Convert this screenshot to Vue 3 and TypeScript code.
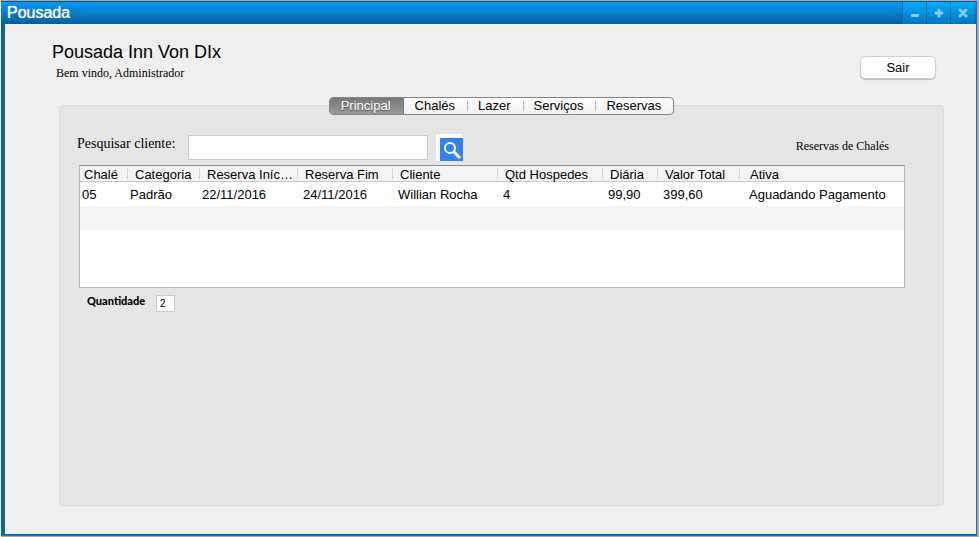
<script setup lang="ts">
import { computed, ref } from 'vue'

interface Column {
  key: string
  label: string
  width: number | null
}

const tabs: string[] = ['Principal', 'Chalés', 'Lazer', 'Serviços', 'Reservas']
const activeTab = ref('Principal')
const search = ref('')
const quantity = ref('2')

const columns: Column[] = [
  { key: 'chale', label: 'Chalé', width: 47 },
  { key: 'categoria', label: 'Categoria', width: 72 },
  { key: 'inicio', label: 'Reserva Iníc…', width: 98 },
  { key: 'fim', label: 'Reserva Fim', width: 95 },
  { key: 'cliente', label: 'Cliente', width: 105 },
  { key: 'hospedes', label: 'Qtd Hospedes', width: 105 },
  { key: 'diaria', label: 'Diária', width: 55 },
  { key: 'total', label: 'Valor Total', width: 82 },
  { key: 'ativa', label: 'Ativa', width: null },
]

const reservations: Record<string, string>[] = [
  {
    chale: '05',
    categoria: 'Padrão',
    inicio: '22/11/2016',
    fim: '24/11/2016',
    cliente: 'Willian Rocha',
    hospedes: '4',
    diaria: '99,90',
    total: '399,60',
    ativa: 'Aguadando Pagamento',
  },
]

const visibleReservations = computed(() =>
  reservations.filter((r) => r.cliente.toLowerCase().includes(search.value.trim().toLowerCase())),
)
</script>

<template>
  <div class="desktop">
    <div class="window">
      <header class="titlebar">
        <span class="title">Pousada</span>
        <div class="window-buttons">
          <button type="button" aria-label="Minimizar">
            <svg viewBox="0 0 10 10"><rect x="1" y="6" width="8" height="3" rx="1" /></svg>
          </button>
          <button type="button" aria-label="Maximizar">
            <svg viewBox="0 0 10 10"><path d="M5 2v6M2 5h6" /></svg>
          </button>
          <button type="button" aria-label="Fechar">
            <svg viewBox="0 0 10 10"><path d="M2 2l6 6M8 2l-6 6" /></svg>
          </button>
        </div>
      </header>

      <main class="content">
        <div class="heading">
          <div>
            <h1>Pousada Inn Von DIx</h1>
            <p>Bem vindo, Administrador</p>
          </div>
          <button type="button" class="logout">Sair</button>
        </div>

        <nav class="tabs" role="tablist">
          <button
            v-for="tab in tabs"
            :key="tab"
            type="button"
            role="tab"
            :aria-selected="tab === activeTab"
            :class="{ active: tab === activeTab }"
            @click="activeTab = tab"
          >
            {{ tab }}
          </button>
        </nav>

        <section class="panel">
          <form class="search" @submit.prevent>
            <label for="cliente">Pesquisar cliente:</label>
            <input id="cliente" v-model="search" type="text" />
            <button type="submit" aria-label="Pesquisar">
              <svg viewBox="0 0 23 23">
                <circle cx="10" cy="10" r="5" />
                <path d="M14 14l6 6" />
              </svg>
            </button>
            <span class="caption">Reservas de Chalés</span>
          </form>

          <div class="grid">
            <table>
              <colgroup>
                <col
                  v-for="c in columns"
                  :key="c.key"
                  :style="c.width ? { width: c.width + 'px' } : undefined"
                />
              </colgroup>
              <thead>
                <tr>
                  <th v-for="c in columns" :key="c.key" scope="col"><span>{{ c.label }}</span></th>
                </tr>
              </thead>
              <tbody>
                <tr v-for="r in visibleReservations" :key="r.chale">
                  <td v-for="c in columns" :key="c.key">{{ r[c.key] }}</td>
                </tr>
                <tr class="blank" aria-hidden="true">
                  <td :colspan="columns.length"></td>
                </tr>
              </tbody>
            </table>
          </div>

          <div class="quantity">
            <label for="quantidade">Quantidade</label>
            <input id="quantidade" v-model="quantity" type="text" />
          </div>
        </section>
      </main>
    </div>
  </div>
</template>

<style>
body {
  background: #a9a9a9;
}
</style>

<style scoped>
* {
  box-sizing: border-box;
}

button,
input {
  margin: 0;
  padding: 0;
  font-family: inherit;
  border-radius: 0;
}

.desktop {
  display: flex;
  min-height: 100vh;
  padding: 1px 2px 1px 1px;
  font-family: "Liberation Sans", Arial, sans-serif;
  color: #000;
  background: linear-gradient(to right, #fff 1px, #a9a9a9 1px);
}

.window {
  flex: 1;
  display: flex;
  flex-direction: column;
  background: #efefef;
  border-right: 1px solid #1673d8;
  border-bottom: 1px solid #1673d8;
}

.titlebar {
  display: flex;
  align-items: center;
  height: 23px;
  padding: 0 2px 0 6px;
  border-top: 1px solid #07588a;
  background: linear-gradient(#0a98f2, #00619f);
}

.title {
  flex: 1;
  font-size: 16px;
  line-height: 22px;
  color: #fff;
  text-shadow: 0 0 1px #fff;
}

.window-buttons {
  display: flex;
  align-self: stretch;
}

.window-buttons button {
  width: 24px;
  border: 0;
  border-left: 1px solid #0369a8;
  background: linear-gradient(#00adff, #0074bd);
}

.window-buttons svg {
  display: block;
  width: 10px;
  height: 10px;
  margin: 0 auto;
  fill: #86cdf0;
}

.window-buttons path {
  fill: none;
  stroke: #86cdf0;
  stroke-width: 3;
  stroke-linecap: round;
}

.content {
  flex: 1;
  display: flex;
  flex-direction: column;
  padding: 16px 32px 28px 54px;
  border-left: 4px solid #11638f;
  border-bottom: 1px solid #11638f;
}

.heading {
  display: flex;
  justify-content: space-between;
  align-items: flex-start;
  height: 57px;
  margin-left: -7px;
  padding-right: 8px;
}

.heading h1 {
  margin: 0;
  font-size: 18px;
  font-weight: 400;
  line-height: 24px;
}

.heading p {
  margin: 0 0 0 4px;
  font-family: "Liberation Serif", "Times New Roman", serif;
  font-size: 12px;
  line-height: 18px;
}

.logout {
  width: 76px;
  height: 23px;
  margin-top: 16px;
  font-size: 13px;
  color: #000;
  background: #fff;
  border: 1px solid #cfcfcf;
  border-radius: 5px;
  box-shadow: 0 1px 1px #bdbdbd;
}

.tabs {
  display: flex;
  align-self: center;
  z-index: 1;
  height: 18px;
  border: 1px solid #858585;
  border-radius: 4px;
  background: linear-gradient(#fff, #f0f0f0);
  overflow: hidden;
}

.tabs button {
  position: relative;
  padding: 0 12px 0 11px;
  border: 0;
  font-size: 13px;
  line-height: 16px;
  color: #000;
  background: none;
}

.tabs button + button::before {
  content: "";
  position: absolute;
  left: 0;
  top: 3px;
  bottom: 3px;
  width: 1px;
  background: #bcbcbc;
}

.tabs button.active {
  color: #fff;
  background: linear-gradient(#777, #999);
  border-right: 1px solid #777;
  text-shadow: 0 1px 1px #555;
}

.tabs button.active + button::before {
  content: none;
}

.panel {
  flex: 1;
  margin-top: -10px;
  padding: 28px 38px 20px 17px;
  background: #e5e5e5;
  border: 1px solid #dbdbdb;
  border-radius: 4px;
}

.search {
  display: flex;
  align-items: flex-start;
  height: 31px;
  font-family: "Liberation Serif", "Times New Roman", serif;
}

.search label {
  width: 111px;
  font-size: 14px;
  line-height: 20px;
}

.search input {
  width: 240px;
  height: 25px;
  margin-top: 1px;
  padding: 0 5px;
  font-size: 13px;
  background: #fff;
  border: 1px solid #cbcbcb;
}

.search button {
  width: 27px;
  height: 27px;
  margin-left: 8px;
  padding: 4px 0 0 4px;
  border: 0;
  background: #fff;
}

.search svg {
  display: block;
  width: 23px;
  height: 23px;
  background: #3580ef;
  fill: none;
  stroke: #fff;
  stroke-width: 2;
}

.search path {
  stroke-width: 3;
}

.caption {
  margin-left: auto;
  padding: 4px 16px 0 0;
  font-size: 12px;
  line-height: 16px;
}

.grid {
  height: 123px;
  margin-left: 2px;
  background: #fff;
  border: 1px solid #b8b8b8;
  border-top-color: #8d8d8d;
}

table {
  width: 100%;
  table-layout: fixed;
  border-collapse: separate;
  border-spacing: 0;
  font-size: 13px;
}

th {
  height: 16px;
  padding: 0 3px 0 0;
  font-weight: 400;
  line-height: 15px;
  text-align: left;
  vertical-align: top;
  background: #f4f4f4;
  border-bottom: 1px solid #c6c6c6;
}

th span {
  display: block;
  height: 15px;
  padding-left: 8px;
  line-height: 17px;
  white-space: nowrap;
  background: linear-gradient(#d4d4d4, #d4d4d4) 0 2px / 1px 11px no-repeat;
}

th:first-child span {
  padding-left: 4px;
  background: none;
}

th:last-child span {
  padding-left: 11px;
}

td {
  height: 24px;
  padding: 0 0 0 6px;
  white-space: nowrap;
}

td:first-child {
  padding-left: 2px;
}

td:nth-child(2),
td:nth-child(3) {
  padding-left: 3px;
}

td:last-child {
  padding-left: 10px;
}

.blank td {
  background: #f4f4f4;
}

.quantity {
  display: flex;
  align-items: flex-start;
  padding: 6px 0 0 10px;
}

.quantity label {
  width: 69px;
  font-family: Lato, sans-serif;
  font-size: 11px;
  font-weight: 900;
  line-height: 14px;
}

.quantity input {
  width: 19px;
  height: 17px;
  margin-top: 1px;
  padding: 0 0 0 3px;
  font-size: 10px;
  background: #fff;
  border: 1px solid #c9c9c9;
}
</style>
